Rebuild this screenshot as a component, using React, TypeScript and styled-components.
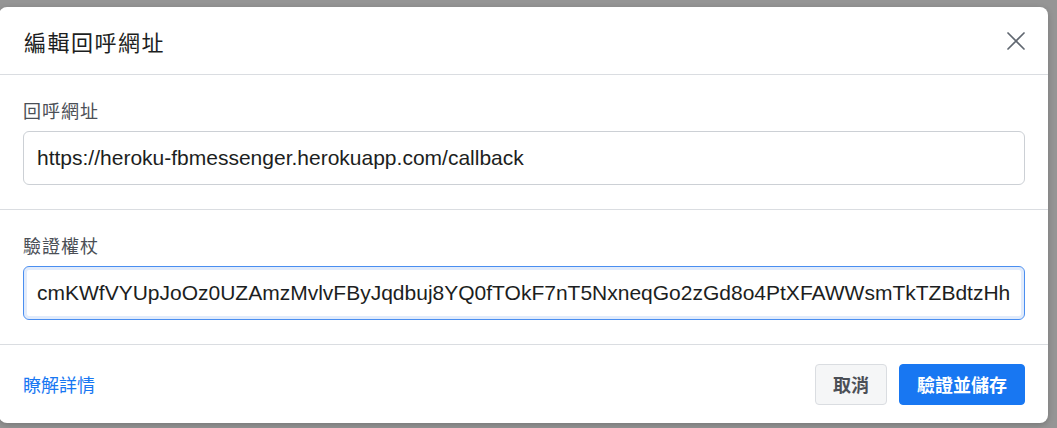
import React from "react";
import styled, { createGlobalStyle } from "styled-components";

const Global = createGlobalStyle`
  html, body { margin: 0; padding: 0; }
  body {
    background: #959595;
    font-family: "Liberation Sans", Arial, "Noto Sans CJK TC", sans-serif;
    width: 1057px;
    height: 428px;
    overflow: hidden;
  }
`;

const Overlay = styled.div`
  width: 1057px;
  height: 428px;
  background: #959595;
  padding-top: 7px;
  box-sizing: border-box;
`;

const Dialog = styled.div`
  width: 1049px;
  margin-left: -1px;
  height: 416px;
  background: #fff;
  border-radius: 8px;
  box-shadow: 0 2px 6px rgba(0, 0, 0, 0.2);
  display: flex;
  flex-direction: column;
  box-sizing: border-box;
`;

const Header = styled.div`
  height: 68px;
  padding: 0 20px 0 25px;
  display: flex;
  align-items: center;
  justify-content: space-between;
  border-bottom: 1px solid #dadde1;
  box-sizing: border-box;
`;

const Title = styled.h1`
  margin: 0;
  font-size: 22px;
  font-weight: 400;
  color: #1c1e21;
  font-family: "Noto Sans CJK TC", sans-serif;
  letter-spacing: 1.5px;
`;

const CloseButton = styled.button`
  border: none;
  background: none;
  padding: 0;
  width: 24px;
  height: 24px;
  display: flex;
  align-items: center;
  justify-content: center;
  cursor: pointer;
`;

const Section = styled.div`
  padding: 24px 23px 24px 24px;
  border-bottom: 1px solid #dadde1;
  display: flex;
  flex-direction: column;
`;

const Label = styled.label`
  font-family: "Noto Sans CJK TC", sans-serif;
  font-size: 18px;
  line-height: 22px;
  letter-spacing: 1px;
  color: #4b4f56;
  margin-bottom: 10px;
  font-weight: 400;
`;

const Input = styled.input<{ $focused?: boolean }>`
  height: 54px;
  box-sizing: border-box;
  width: 100%;
  padding: 0 14px 0 13px;
  font-family: "Liberation Sans", Arial, sans-serif;
  font-size: 21px;
  color: #1c1e21;
  background: #fff;
  border-radius: 6px;
  outline: none;
  border: 1px solid ${(p) => (p.$focused ? "#4a8ef0" : "#ccd0d5")};
  box-shadow: ${(p) => (p.$focused ? "inset 0 0 0 3px #e1ebfb" : "none")};
`;

const Footer = styled.div`
  flex: 1;
  display: flex;
  align-items: center;
  justify-content: space-between;
  padding: 0 23px 0 24px;
`;

const Link = styled.a`
  font-family: "Noto Sans CJK TC", sans-serif;
  font-size: 18px;
  color: #1877f2;
  text-decoration: none;
`;

const Actions = styled.div`
  display: flex;
  gap: 12px;
`;

const Button = styled.button<{ $primary?: boolean }>`
  height: 41px;
  box-sizing: border-box;
  padding: 0 17px;
  border-radius: 4px;
  font-family: "Noto Sans CJK TC", sans-serif;
  font-size: 18px;
  font-weight: 700;
  cursor: pointer;
  border: 1px solid ${(p) => (p.$primary ? "#1877f2" : "#dadde1")};
  background: ${(p) => (p.$primary ? "#1877f2" : "#f5f6f7")};
  color: ${(p) => (p.$primary ? "#fff" : "#4b4f56")};
`;

export default function App() {
  return (
    <>
      <Global />
      <Overlay>
        <Dialog>
          <Header>
            <Title>編輯回呼網址</Title>
            <CloseButton aria-label="close">
              <svg width="20" height="20" viewBox="0 0 20 20">
                <path d="M2 2 L18 18 M18 2 L2 18" stroke="#606770" strokeWidth="1.7" strokeLinecap="round" />
              </svg>
            </CloseButton>
          </Header>
          <Section>
            <Label>回呼網址</Label>
            <Input readOnly value="https://heroku-fbmessenger.herokuapp.com/callback" />
          </Section>
          <Section>
            <Label>驗證權杖</Label>
            <Input
              $focused
              readOnly
              value="cmKWfVYUpJoOz0UZAmzMvlvFByJqdbuj8YQ0fTOkF7nT5NxneqGo2zGd8o4PtXFAWWsmTkTZBdtzHh"
            />
          </Section>
          <Footer>
            <Link href="#">瞭解詳情</Link>
            <Actions>
              <Button>取消</Button>
              <Button $primary>驗證並儲存</Button>
            </Actions>
          </Footer>
        </Dialog>
      </Overlay>
    </>
  );
}
